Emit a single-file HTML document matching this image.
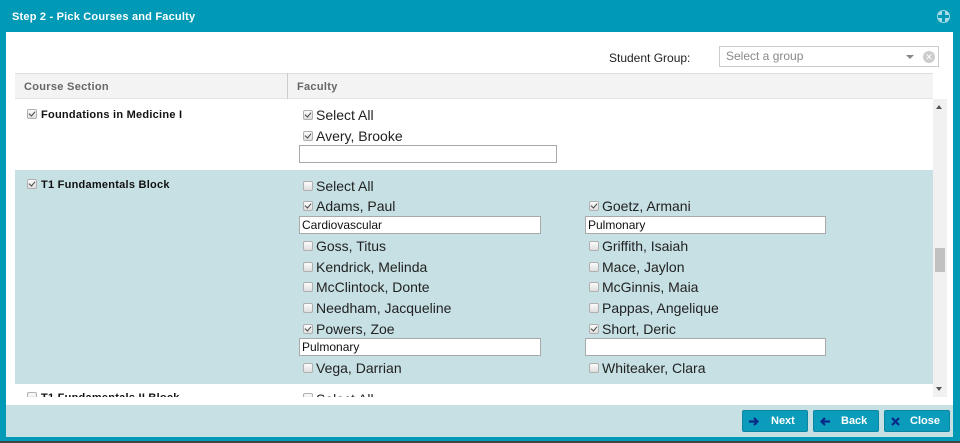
<!DOCTYPE html>
<html><head><meta charset="utf-8"><style>
*{margin:0;padding:0;box-sizing:border-box}
body{width:960px;height:443px;background:#444;font-family:"Liberation Sans",Arial,sans-serif;position:relative;overflow:hidden}
.frame{position:absolute;left:0;top:0;width:960px;height:441px;background:#009ab7}
.a{position:absolute}
.cb{position:absolute;width:10px;height:10px;border:1px solid #b0b0b0;border-radius:2px;background:linear-gradient(#fbfbfb,#dedede)}
.cb.on::after{content:"";position:absolute;left:2px;top:0px;width:3px;height:5px;border:solid #444;border-width:0 1.5px 1.5px 0;transform:rotate(40deg)}
.t{position:absolute;font-size:14px;color:#222;white-space:nowrap;line-height:16px}
.in{position:absolute;height:18px;background:#fff;border:1px solid #a9a9a9;font-size:12px;line-height:16px;padding-left:2px;color:#111}
.c{position:absolute;font-size:11px;font-weight:bold;color:#111;white-space:nowrap;line-height:13px;letter-spacing:0.25px}
.btn{position:absolute;top:410px;height:22px;background:#0b9bbb;border:1px solid #0a86a3;border-radius:2px;color:#fff;font-weight:bold;font-size:11px;line-height:20px}
.btn svg{position:absolute;left:5px;top:5px}
</style></head><body>
<div class="frame"></div>
<div class="a" style="left:12px;top:11px;color:#fff;font-weight:bold;font-size:11px;letter-spacing:0.2px">Step 2 - Pick Courses and Faculty</div>
<div class="a" style="left:937px;top:10px;width:13px;height:13px;border-radius:50%;background:#a9dbe6"></div>
<div class="a" style="left:942px;top:11px;width:3px;height:11px;background:#009ab7"></div>
<div class="a" style="left:938px;top:15px;width:11px;height:3px;background:#009ab7"></div>
<div class="a" style="left:6px;top:32px;width:947px;height:373px;background:#fff"></div>
<div class="a" style="left:6px;top:405px;width:947px;height:32px;background:#c6e0e4"></div>
<div class="a" style="left:609px;top:51px;font-size:12px;color:#222">Student Group:</div>
<div class="a" style="left:719px;top:46px;width:220px;height:21px;border:1px solid #ccc;background:#fff;font-size:12px;color:#888;line-height:19px;padding-left:6px">Select a group</div>
<div class="a" style="left:906px;top:55px;border:4px solid transparent;border-top:4px solid #888"></div>
<div class="a" style="left:923px;top:51px;width:12px;height:12px;border-radius:50%;background:#ccc;color:#fff;font-size:9px;line-height:12px;text-align:center">✕</div>
<div class="a" style="left:15px;top:73px;width:918px;height:26px;background:#f3f3f3;border-top:1px solid #ddd;border-bottom:1px solid #e4e4e4"></div>
<div class="a" style="left:287px;top:73px;width:1px;height:26px;background:#ccc"></div>
<div class="a" style="left:24px;top:81px;font-size:11px;font-weight:bold;color:#666;letter-spacing:0.3px">Course Section</div>
<div class="a" style="left:297px;top:81px;font-size:11px;font-weight:bold;color:#666;letter-spacing:0.3px">Faculty</div>
<div class="a" style="left:933px;top:99px;width:14px;height:298px;background:#f1f1f1"></div>
<div class="a" style="left:935px;top:248px;width:10px;height:24px;background:#c1c1c1"></div>
<div class="a" style="left:936px;top:102px;border:3px solid transparent;border-bottom:4px solid #555"></div>
<div class="a" style="left:936px;top:387px;border:3px solid transparent;border-top:4px solid #555"></div>
<div class="a" style="left:15px;top:170px;width:918px;height:214px;background:#c6e0e4"></div>

<div class="cb on" style="left:27px;top:109px"></div><div class="c" style="left:41px;top:109px">Foundations in Medicine I</div>
<div class="cb on" style="left:303px;top:110px"></div><div class="t" style="left:316px;top:107px">Select All</div>
<div class="cb on" style="left:303px;top:131px"></div><div class="t" style="left:316px;top:128px">Avery, Brooke</div>
<div class="in" style="left:299px;top:145px;width:258px"></div>

<div class="cb on" style="left:27px;top:179px"></div><div class="c" style="left:41px;top:179px">T1 Fundamentals Block</div>
<div class="cb" style="left:303px;top:181px"></div><div class="t" style="left:316px;top:178px">Select All</div>
<div class="cb on" style="left:303px;top:201px"></div><div class="t" style="left:316px;top:198px">Adams, Paul</div>
<div class="cb on" style="left:589px;top:201px"></div><div class="t" style="left:602px;top:198px">Goetz, Armani</div>
<div class="in" style="left:299px;top:216px;width:242px">Cardiovascular</div>
<div class="in" style="left:585px;top:216px;width:241px">Pulmonary</div>
<div class="cb" style="left:303px;top:241px"></div><div class="t" style="left:316px;top:238px">Goss, Titus</div>
<div class="cb" style="left:589px;top:241px"></div><div class="t" style="left:602px;top:238px">Griffith, Isaiah</div>
<div class="cb" style="left:303px;top:262px"></div><div class="t" style="left:316px;top:259px">Kendrick, Melinda</div>
<div class="cb" style="left:589px;top:262px"></div><div class="t" style="left:602px;top:259px">Mace, Jaylon</div>
<div class="cb" style="left:303px;top:282px"></div><div class="t" style="left:316px;top:279px">McClintock, Donte</div>
<div class="cb" style="left:589px;top:282px"></div><div class="t" style="left:602px;top:279px">McGinnis, Maia</div>
<div class="cb" style="left:303px;top:303px"></div><div class="t" style="left:316px;top:300px">Needham, Jacqueline</div>
<div class="cb" style="left:589px;top:303px"></div><div class="t" style="left:602px;top:300px">Pappas, Angelique</div>
<div class="cb on" style="left:303px;top:324px"></div><div class="t" style="left:316px;top:321px">Powers, Zoe</div>
<div class="cb on" style="left:589px;top:324px"></div><div class="t" style="left:602px;top:321px">Short, Deric</div>
<div class="in" style="left:299px;top:338px;width:242px">Pulmonary</div>
<div class="in" style="left:585px;top:338px;width:241px"></div>
<div class="cb" style="left:303px;top:363px"></div><div class="t" style="left:316px;top:360px">Vega, Darrian</div>
<div class="cb" style="left:589px;top:363px"></div><div class="t" style="left:602px;top:360px">Whiteaker, Clara</div>

<div class="a" style="left:15px;top:384px;width:918px;height:13px;overflow:hidden">
<div class="cb" style="left:12px;top:8px"></div><div class="c" style="left:26px;top:8px">T1 Fundamentals II Block</div>
<div class="cb" style="left:288px;top:9px"></div><div class="t" style="left:301px;top:7px">Select All</div>
</div>

<div class="btn" style="left:742px;width:66px"><svg width="12" height="11" viewBox="0 0 12 11"><path d="M1 5.5H9M6 2l3.5 3.5L6 9" stroke="#0a2a8a" stroke-width="2.2" fill="none"/></svg><b style="position:absolute;left:28px">Next</b></div>
<div class="btn" style="left:813px;width:66px"><svg width="12" height="11" viewBox="0 0 12 11"><path d="M11 5.5H3M6 2L2.5 5.5L6 9" stroke="#0a2a8a" stroke-width="2.2" fill="none"/></svg><b style="position:absolute;left:27px">Back</b></div>
<div class="btn" style="left:884px;width:66px"><svg width="12" height="11" viewBox="0 0 12 11"><path d="M2 2l7 7M9 2L2 9" stroke="#0a2a8a" stroke-width="2.2" fill="none"/></svg><b style="position:absolute;left:25px">Close</b></div>
</body></html>
